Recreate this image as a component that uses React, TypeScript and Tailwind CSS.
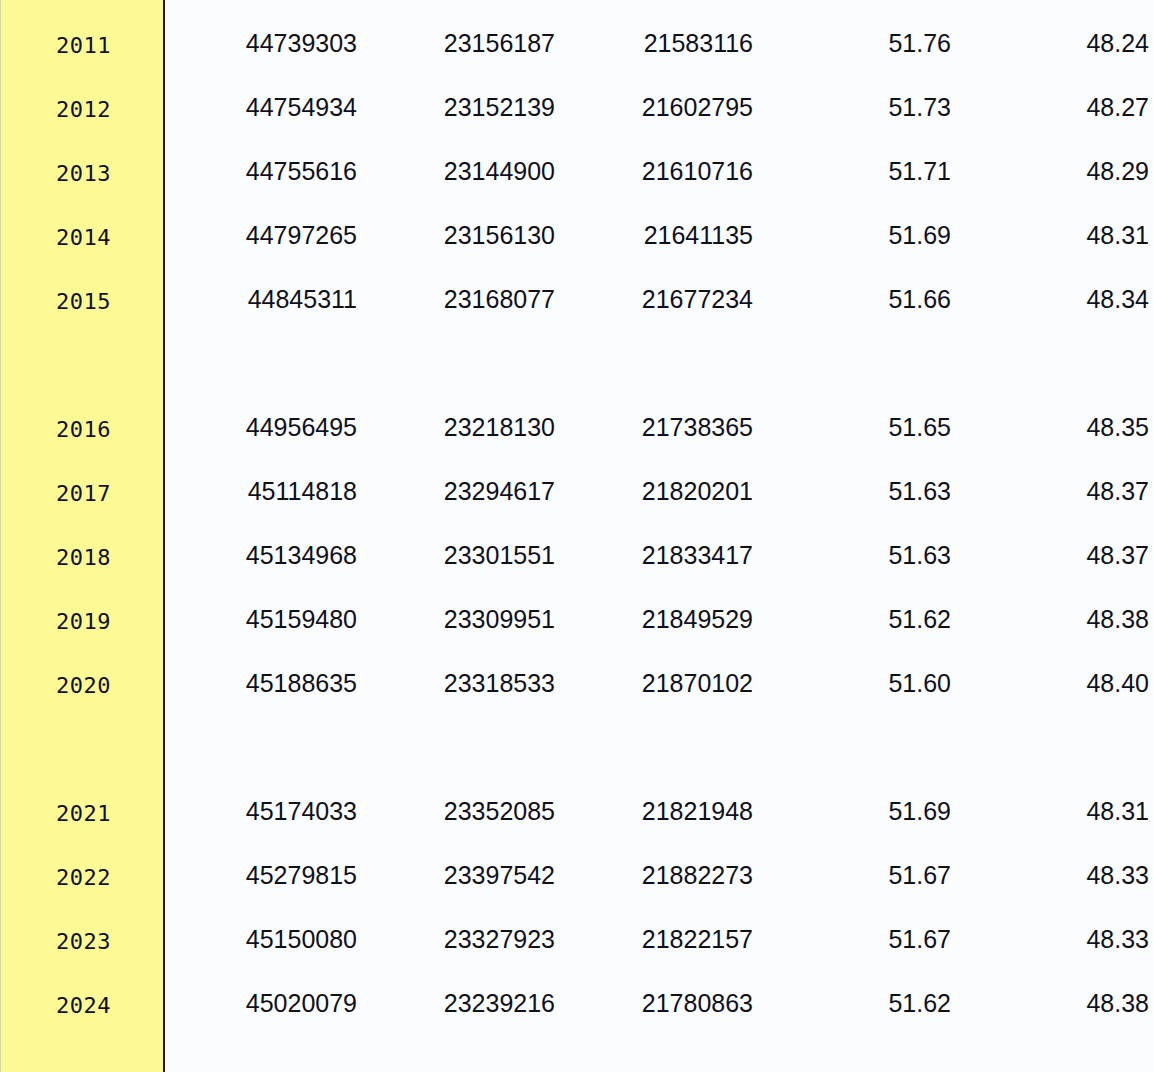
import React from 'react';

type Row = [string, string, string, string, string, string] | null;

const rows: Row[] = [
  ['2011', '44739303', '23156187', '21583116', '51.76', '48.24'],
  ['2012', '44754934', '23152139', '21602795', '51.73', '48.27'],
  ['2013', '44755616', '23144900', '21610716', '51.71', '48.29'],
  ['2014', '44797265', '23156130', '21641135', '51.69', '48.31'],
  ['2015', '44845311', '23168077', '21677234', '51.66', '48.34'],
  null,
  ['2016', '44956495', '23218130', '21738365', '51.65', '48.35'],
  ['2017', '45114818', '23294617', '21820201', '51.63', '48.37'],
  ['2018', '45134968', '23301551', '21833417', '51.63', '48.37'],
  ['2019', '45159480', '23309951', '21849529', '51.62', '48.38'],
  ['2020', '45188635', '23318533', '21870102', '51.60', '48.40'],
  null,
  ['2021', '45174033', '23352085', '21821948', '51.69', '48.31'],
  ['2022', '45279815', '23397542', '21882273', '51.67', '48.33'],
  ['2023', '45150080', '23327923', '21822157', '51.67', '48.33'],
  ['2024', '45020079', '23239216', '21780863', '51.62', '48.38'],
];

const colWidths = ['w-[192px]', 'w-[198px]', 'w-[198px]', 'w-[198px]', 'w-[198px]'];

export default function App() {
  return (
    <div className="w-[1154px] h-[1072px] overflow-hidden flex bg-[#fbfcfe] text-[#10101a]">
      {/* year column */}
      <div className="w-[165px] shrink-0 bg-[#fdf995] border-l border-[#d8d6a0] border-r-2 border-r-[#1a1a1a] pt-[11px]">
        {rows.map((r, i) => (
          <div
            key={i}
            className="h-[64px] flex items-center justify-center pt-[4px] pl-[3px] text-[22px] [font-family:'DejaVu_Sans_Mono',monospace] tracking-[0.5px]"
          >
            {r ? r[0] : ''}
          </div>
        ))}
      </div>

      {/* data columns */}
      <div className="flex-1 pt-[11px] [font-family:'Liberation_Sans',Arial,sans-serif] text-[25px]">
        {rows.map((r, i) => (
          <div key={i} className="h-[64px] flex items-center">
            {r &&
              r.slice(1).map((v, j) => (
                <div key={j} className={`${colWidths[j]} shrink-0 text-right leading-none`}>
                  {v}
                </div>
              ))}
          </div>
        ))}
      </div>
    </div>
  );
}
